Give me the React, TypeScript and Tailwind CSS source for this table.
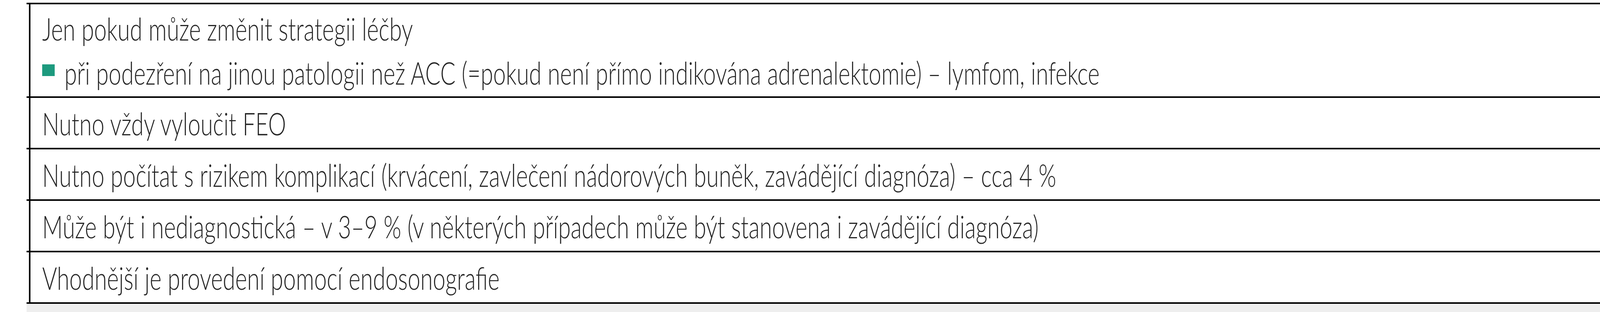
import React from "react";

const singleRows: string[] = [
  "Nutno vždy vyloučit FEO",
  "Nutno počítat s rizikem komplikací (krvácení, zavlečení nádorových buněk, zavádějící diagnóza) – cca 4 %",
  "Může být i nediagnostická – v 3–9 % (v některých případech může být stanovena i zavádějící diagnóza)",
  "Vhodnější je provedení pomocí endosonografie",
];

const txt = "inline-block origin-left scale-x-[0.716]";

export default function App() {
  return (
    <div className="w-full h-[800px] overflow-hidden bg-white font-['Lato',sans-serif] font-light text-[#262626] text-[81px] leading-[113px]">
      <div className="pt-[7px] pl-[68px]">
        <div className="w-[5615px]">
          <div className="border-t-4 border-black">
            <div className="border-b-4 border-black">
              <div className="mx-[6px] border-x-4 border-black h-[236px] flex flex-col justify-center pl-[30px] whitespace-nowrap overflow-hidden">
                <div>
                  <span className={txt}>Jen pokud může změnit strategii léčby</span>
                </div>
                <div className="flex items-start">
                  <span className="mt-[36px] w-[32px] h-[30px] bg-[#1d9a7e] mr-[25px] shrink-0" />
                  <span className={txt}>
                    při podezření na jinou patologii než ACC (=pokud není přímo indikována adrenalektomie) – lymfom, infekce
                  </span>
                </div>
              </div>
            </div>
            {singleRows.map((t) => (
              <div key={t} className="border-b-4 border-black">
                <div className="mx-[6px] border-x-4 border-black h-[128px] flex items-center pl-[30px] whitespace-nowrap overflow-hidden">
                  <span className={txt}>{t}</span>
                </div>
              </div>
            ))}
          </div>
          <div className="h-[21px] bg-[#eeeeee]" />
        </div>
      </div>
    </div>
  );
}
